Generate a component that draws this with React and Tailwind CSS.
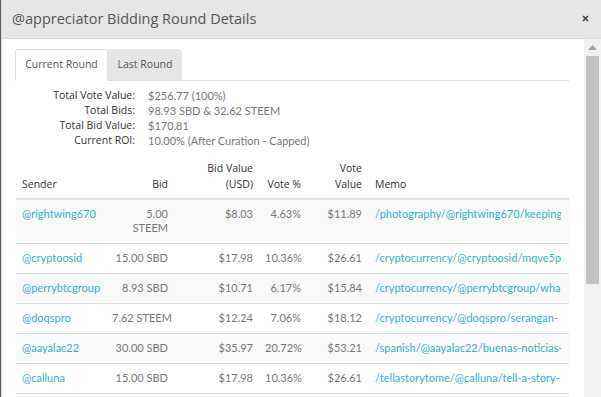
import React from "react";

const rows = [
  { s: "@rightwing670", b: ["5.00", "STEEM"], v: "$8.03", p: "4.63%", vv: "$11.89", m: "/photography/@rightwing670/keeping-the-light-on" },
  { s: "@cryptoosid", b: ["15.00 SBD"], v: "$17.98", p: "10.36%", vv: "$26.61", m: "/cryptocurrency/@cryptoosid/mqve5pxyz" },
  { s: "@perrybtcgroup", b: ["8.93 SBD"], v: "$10.71", p: "6.17%", vv: "$15.84", m: "/cryptocurrency/@perrybtcgroup/what-is" },
  { s: "@doqspro", b: ["7.62 STEEM"], v: "$12.24", p: "7.06%", vv: "$18.12", m: "/cryptocurrency/@doqspro/serangan-" },
  { s: "@aayalac22", b: ["30.00 SBD"], v: "$35.97", p: "20.72%", vv: "$53.21", m: "/spanish/@aayalac22/buenas-noticias-" },
  { s: "@calluna", b: ["15.00 SBD"], v: "$17.98", p: "10.36%", vv: "$26.61", m: "/tellastorytome/@calluna/tell-a-story-" },
  { s: "@another", b: ["10.00 SBD"], v: "$11.99", p: "6.90%", vv: "$17.74", m: "/life/@another/post" },
];

const data = { fontFamily: "Lato, 'Open Sans', sans-serif" };
const label = { fontFamily: "'Open Sans', 'Noto Sans', sans-serif" };

export default function App() {
  return (
    <div className="w-[601px] h-[397px] flex bg-white overflow-hidden">
      <div className="w-[1px] bg-[#5d6160]" />
      <div className="w-[1px] bg-[#d4d4d4]" />
      <div className="flex-1 flex flex-col min-w-0">
        <div className="h-[39px] shrink-0 bg-[#e6e6e6] border-b border-[#dadada] flex items-center justify-between pl-[10px] pr-[12px]">
          <span className="text-[14.5px] text-[#555]" style={label}>@appreciator Bidding Round Details</span>
          <svg width="7" height="7" viewBox="0 0 7 7" className="mb-[2px]">
            <path d="M1 1L6 6M6 1L1 6" stroke="#444" strokeWidth="1.6" />
          </svg>
        </div>
        <div className="flex flex-1 min-h-0">
          <div className="flex-1 min-w-0 pl-[13px] pr-[15px] pt-[10px] overflow-hidden">
            <div className="flex border-b border-[#ddd] h-[32px]">
              <div className="w-[93px] h-[32px] bg-white border border-[#ddd] border-b-white rounded-t-[3px] flex items-center justify-center text-[10.5px] text-[#555]" style={label}>
                Current Round
              </div>
              <div className="w-[74px] h-[31px] bg-[#e6e6e6] rounded-t-[3px] flex items-center justify-center text-[10.5px] text-[#555]" style={label}>
                Last Round
              </div>
            </div>
            <div className="mt-[7px] grid grid-cols-[120px_auto] gap-x-[13px] text-[11px] leading-[15px]">
              <div className="text-right text-[#333] text-[10.5px]" style={label}>Total Vote Value:</div>
              <div className="text-[#777]" style={data}>$256.77 (100%)</div>
              <div className="text-right text-[#333] text-[10.5px]" style={label}>Total Bids:</div>
              <div className="text-[#777]" style={data}>98.93 SBD &amp; 32.62 STEEM</div>
              <div className="text-right text-[#333] text-[10.5px]" style={label}>Total Bid Value:</div>
              <div className="text-[#777]" style={data}>$170.81</div>
              <div className="text-right text-[#333] text-[10.5px]" style={label}>Current ROI:</div>
              <div className="text-[#777]" style={data}>10.00% (After Curation - Capped)</div>
            </div>
            <table className="mt-[12px] w-[553px] table-fixed border-collapse text-[11px] ml-[1px]">
              <colgroup>
                <col className="w-[90px]" />
                <col className="w-[68px]" />
                <col className="w-[85px]" />
                <col className="w-[48px]" />
                <col className="w-[61px]" />
                <col className="w-[201px]" />
              </colgroup>
              <thead>
                <tr className="border-b-2 border-[#e2e2e2] text-[#333] leading-[16px] text-[10.5px]" style={label}>
                  <th className="font-normal text-left align-bottom px-[6px] pb-[6px]">Sender</th>
                  <th className="font-normal text-right align-bottom px-[6px] pb-[6px]">Bid</th>
                  <th className="font-normal text-right align-bottom px-[6px] pb-[6px]">Bid Value<br />(USD)</th>
                  <th className="font-normal text-right align-bottom px-[6px] pb-[6px] whitespace-nowrap">Vote %</th>
                  <th className="font-normal text-right align-bottom px-[6px] pb-[6px]">Vote<br />Value</th>
                  <th className="font-normal text-left align-bottom px-[7px] pb-[6px]">Memo</th>
                </tr>
              </thead>
              <tbody style={data} className="leading-[14px] text-[#777]">
                {rows.map((r, i) => (
                  <tr key={i} className={(i % 2 === 0 ? "bg-[#f9f9f9]" : "bg-white") + " border-t border-[#dddddd]"}>
                    <td className="align-top px-[6px] pt-[7px] pb-[8px] text-[#31b0d5] whitespace-nowrap overflow-hidden">{r.s}</td>
                    <td className="align-top text-right px-[6px] pt-[7px] pb-[8px] whitespace-nowrap">
                      {r.b.map((x, j) => (
                        <div key={j}>{x}</div>
                      ))}
                    </td>
                    <td className="align-top text-right px-[6px] pt-[7px] pb-[8px]">{r.v}</td>
                    <td className="align-top text-right px-[6px] pt-[7px] pb-[8px] whitespace-nowrap">{r.p}</td>
                    <td className="align-top text-right px-[6px] pt-[7px] pb-[8px]">{r.vv}</td>
                    <td className="align-top pl-[7px] pr-[6px] pt-[7px] pb-[8px]">
                      <div className="w-[186px] overflow-hidden whitespace-nowrap text-[#31b0d5]">{r.m}</div>
                    </td>
                  </tr>
                ))}
              </tbody>
            </table>
          </div>
          <div className="w-[17px] shrink-0 bg-[#f1f1f1] flex flex-col items-center">
            <svg width="9" height="5" viewBox="0 0 9 5" className="mt-[6px]">
              <path d="M0 5L4.5 0L9 5Z" fill="#a3a3a3" />
            </svg>
            <div className="mt-[6px] w-[13px] h-[228px] bg-[#c1c1c1]" />
          </div>
        </div>
      </div>
    </div>
  );
}
